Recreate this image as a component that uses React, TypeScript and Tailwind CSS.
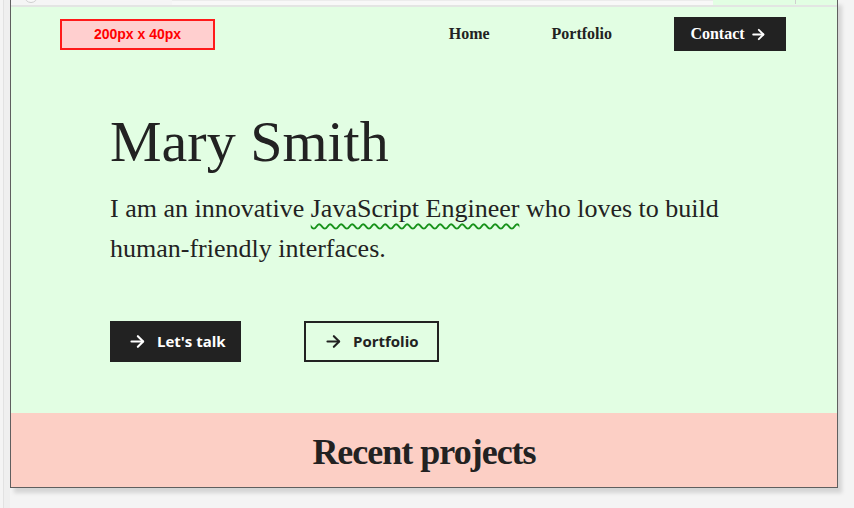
import React from "react";

const Arrow = ({ className = "" }: { className?: string }) => (
  <svg viewBox="0 0 24 24" className={className} fill="none" stroke="currentColor" strokeWidth={3} strokeLinecap="round" strokeLinejoin="round">
    <path d="M3.5 12h16" />
    <path d="M12.5 4.5l7.5 7.5-7.5 7.5" />
  </svg>
);

export default function App() {
  const serif = { fontFamily: '"Liberation Serif", "Times New Roman", serif' };
  return (
    <div className="w-[854px] h-[508px] bg-[#f4f4f4] flex overflow-hidden">
      <div className="w-[10px] flex shrink-0">
        <div className="w-[3px]" />
        <div className="w-[1px] bg-[#e2e2e2]" />
        <div className="flex-1 bg-[#efefef]" />
      </div>
      <div className="w-[828px] h-[488px] shrink-0 border-x border-b border-[#5f5f5f] shadow-[4px_5px_4px_rgba(0,0,0,0.13)] flex flex-col overflow-hidden bg-[#e2fee3]">
        {/* top strip */}
        <div className="h-[5px] flex shrink-0 overflow-hidden">
          <div className="w-[702px] bg-[#f5f5f5] flex">
            <div className="w-[13px]" />
            <div className="w-[14px] h-[14px] -mt-[11px] rounded-full border border-[#cfcfcf] bg-[#f9f9f9]" />
            <div className="w-[134px]" />
            <div className="flex-1 bg-[#f8f8f8] border-t border-[#ececec]" />
          </div>
          <div className="flex-1 bg-[#e2fee3] flex">
            <div className="w-[82px]" />
            <div className="w-[1px] h-[4px] bg-[#cfcfcf]" />
          </div>
        </div>
        <div className="h-[2px] bg-[#e3e5e3] shrink-0" />

        {/* hero */}
        <div className="h-[406px] shrink-0 flex flex-col text-[#222222]">
          <nav className="flex items-center justify-between pl-[49px] pr-[51px] pt-[10px] h-[44px]">
            <div
              className="w-[155px] h-[31px] bg-[#ffcfcf] border-2 border-[#ff1a1a] flex items-center justify-center text-[#ff0000] font-bold text-[14px]"
              style={{ fontFamily: '"Liberation Sans", Arial, sans-serif' }}
            >
              200px x 40px
            </div>
            <div className="flex items-center gap-[62px] text-[16px] font-bold" style={serif}>
              <span>Home</span>
              <span>Portfolio</span>
              <span className="w-[112px] h-[34px] bg-[#222222] text-white flex items-center justify-center gap-[6px] pr-[4px]">
                Contact
                <Arrow className="w-[15px] h-[15px]" />
              </span>
            </div>
          </nav>
          <div className="pl-[99px] pt-[56px]">
            <h1 className="text-[58px] leading-[1.2] font-normal" style={serif}>
              Mary Smith
            </h1>
            <p className="mt-[12px] text-[26px] leading-[40px] max-w-[640px]" style={serif}>
              I am an innovative{" "}
              <span className="underline decoration-wavy decoration-[#17921a] decoration-[1.5px] underline-offset-[6px]">
                JavaScript Engineer
              </span>{" "}
              who loves to build human-friendly interfaces.
            </p>
            <div
              className="mt-[52px] flex gap-[63px] text-[15px] font-bold"
              style={{ fontFamily: '"Open Sans", "Liberation Sans", sans-serif' }}
            >
              <button className="w-[131px] h-[41px] bg-[#222222] text-white flex items-center pl-[19px] gap-[11px]">
                <Arrow className="w-[17px] h-[17px]" />
                Let&apos;s talk
              </button>
              <button className="w-[135px] h-[41px] border-2 border-[#222222] text-[#222222] flex items-center pl-[19px] gap-[11px]">
                <Arrow className="w-[17px] h-[17px]" />
                Portfolio
              </button>
            </div>
          </div>
        </div>

        {/* recent projects */}
        <div className="flex-1 bg-[#fccfc5] pt-[18px] flex justify-center">
          <h2 className="text-[36px] leading-[1.2] font-bold tracking-[-1px] text-[#222222]" style={serif}>
            Recent projects
          </h2>
        </div>
      </div>
    </div>
  );
}
